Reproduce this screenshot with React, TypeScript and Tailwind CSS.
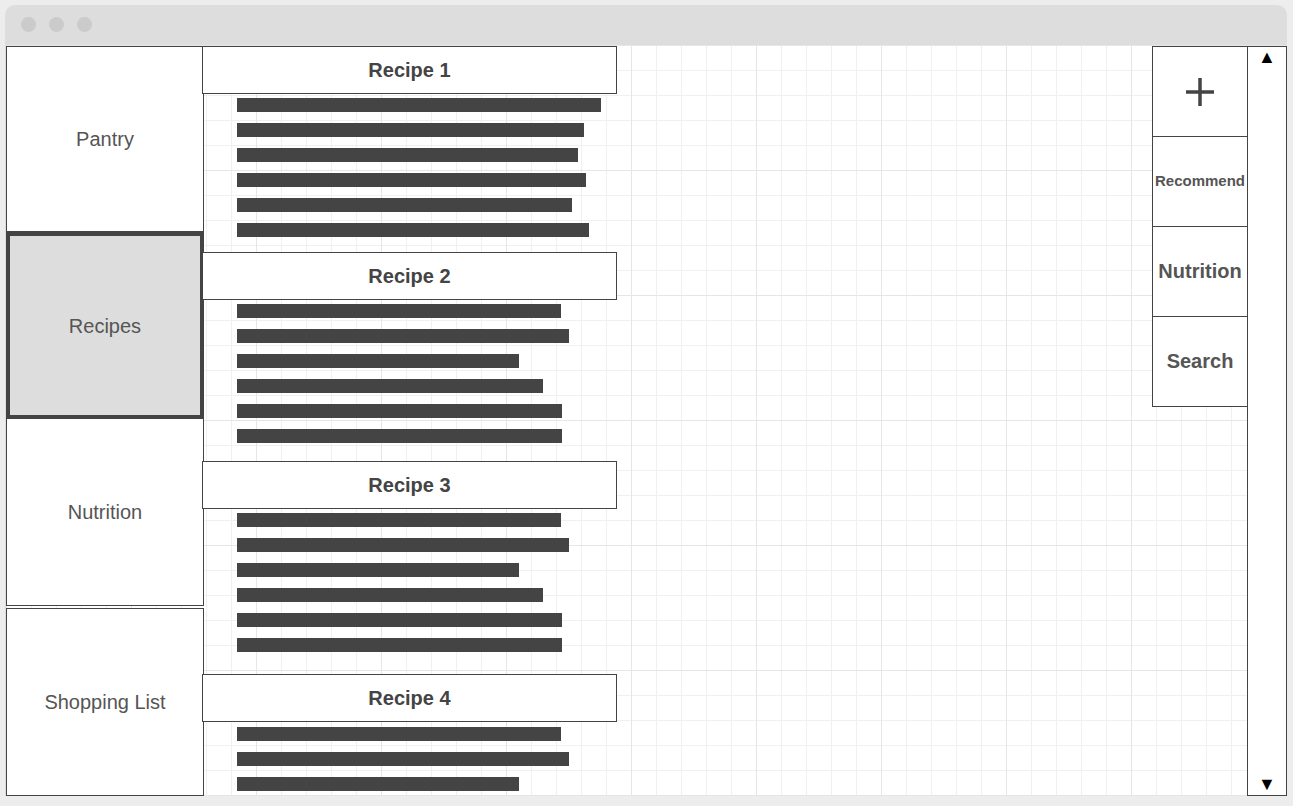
import React from "react";

const recipes = [
  { title: "Recipe 1", gap: 0, barTop: 4, bars: [364, 347, 341, 349, 335, 352] },
  { title: "Recipe 2", gap: 15, barTop: 4, bars: [324, 332, 282, 306, 325, 325] },
  { title: "Recipe 3", gap: 18, barTop: 4, bars: [324, 332, 282, 306, 325, 325] },
  { title: "Recipe 4", gap: 22, barTop: 5, bars: [324, 332, 282] },
];

const gapClass: Record<number, string> = {
  0: "mt-0",
  15: "mt-[15px]",
  18: "mt-[18px]",
  22: "mt-[22px]",
};

const barTopClass: Record<number, string> = {
  4: "mt-[4px]",
  5: "mt-[5px]",
};

export default function App() {
  return (
    <div className="w-[1293px] h-[806px] bg-[#ededed] pt-[5px] pl-[5px] pr-[6px] pb-[10px] font-['Liberation_Sans',Arial,sans-serif] overflow-hidden">
      <div className="flex flex-col h-full bg-[#dddddd] rounded-t-[10px]">
        {/* title bar */}
        <div className="h-[40px] shrink-0 flex items-center gap-[13px] pl-[16px] pb-[2px]">
          <span className="w-[15px] h-[15px] rounded-full bg-[#cbcbcb]" />
          <span className="w-[15px] h-[15px] rounded-full bg-[#cbcbcb]" />
          <span className="w-[15px] h-[15px] rounded-full bg-[#cbcbcb]" />
        </div>

        {/* canvas */}
        <div className="flex-1 ml-[1px] pt-[1px] flex bg-white overflow-hidden bg-[linear-gradient(to_right,#e6e6e6_1px,transparent_1px),linear-gradient(to_bottom,#e6e6e6_1px,transparent_1px),linear-gradient(to_right,#f0f0f0_1px,transparent_1px),linear-gradient(to_bottom,#f0f0f0_1px,transparent_1px)] bg-[size:125px_125px,125px_125px,25px_25px,25px_25px]">
          {/* sidebar */}
          <div className="w-[198px] shrink-0 flex flex-col text-[20px] text-[#555555]">
            <div className="h-[186px] bg-white border border-[#444444] flex items-center justify-center">Pantry</div>
            <div className="h-[187px] bg-[#dddddd] border-[4px] border-[#444444] flex items-center justify-center">Recipes</div>
            <div className="h-[187px] bg-white border border-t-0 border-[#444444] flex items-center justify-center">Nutrition</div>
            <div className="h-[188px] mt-[2px] bg-white border border-[#444444] flex items-center justify-center">Shopping List</div>
          </div>

          {/* recipe list */}
          <div className="w-[415px] shrink-0 ml-[-2px] flex flex-col overflow-hidden">
            {recipes.map((r) => (
              <div key={r.title} className={`flex flex-col shrink-0 ${gapClass[r.gap]}`}>
                <div className="h-[48px] bg-white border border-[#444444] flex items-center justify-center text-[20px] font-bold text-[#444444]">
                  {r.title}
                </div>
                <div className={`flex flex-col gap-[11px] pl-[35px] ${barTopClass[r.barTop]}`}>
                  {r.bars.map((w, i) => (
                    <div key={i} className="h-[14px] bg-[#444444]" style={{ width: w }} />
                  ))}
                </div>
              </div>
            ))}
          </div>

          <div className="flex-1" />

          {/* right action panel */}
          <div className="w-[96px] shrink-0 mr-[-1px] flex flex-col">
            <div className="h-[91px] bg-white border border-[#444444] flex items-center justify-center">
              <svg width="30" height="30" viewBox="0 0 30 30">
                <path d="M15 1V29M1 15H29" stroke="#444444" strokeWidth="3.5" />
              </svg>
            </div>
            <div className="h-[90px] bg-white border border-t-0 border-[#444444] flex items-center justify-center text-[15px] font-bold text-[#555555]">
              Recommend
            </div>
            <div className="h-[90px] bg-white border border-t-0 border-[#444444] flex items-center justify-center text-[20px] font-bold text-[#555555] pb-[2px]">
              Nutrition
            </div>
            <div className="h-[90px] bg-white border border-t-0 border-[#444444] flex items-center justify-center text-[20px] font-bold text-[#555555] pb-[2px]">
              Search
            </div>
          </div>

          {/* scrollbar */}
          <div className="w-[40px] shrink-0 bg-white border border-[#444444] flex flex-col items-center justify-between pt-[1px] pb-[2px] text-[18px] leading-none text-black">
            <span>▲</span>
            <span>▼</span>
          </div>
        </div>
      </div>
    </div>
  );
}
